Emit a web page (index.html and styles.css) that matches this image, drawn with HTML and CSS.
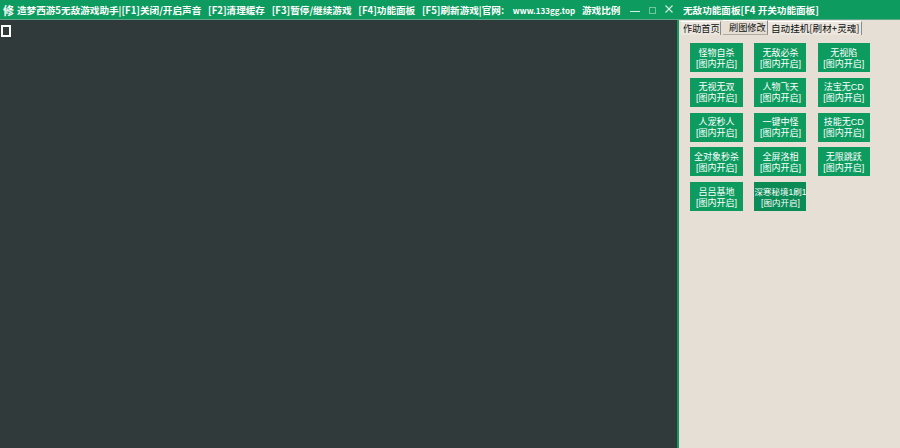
FILE: index.html
```html
<!DOCTYPE html>
<html lang="zh">
<head>
<meta charset="utf-8">
<title>造梦西游</title>
<link rel="stylesheet" href="styles.css">
</head>
<body>
<header class="titlebar">
  <div class="title-left">
    <span class="app-mark">修</span>
    <span class="title-text">造梦西游5无敌游戏助手|[F1]关闭/开启声音 [F2]清理缓存 [F3]暂停/继续游戏 [F4]功能面板 [F5]刷新游戏|官网: <span class="title-url">www.133gg.top</span> 游戏比例</span>
  </div>
  <div class="win-controls">
    <span class="win-btn win-min"></span>
    <span class="win-btn win-max"></span>
    <svg class="win-close" width="8" height="8" viewBox="0 0 8 8"><path d="M0.5 0.5L7.5 7.5M7.5 0.5L0.5 7.5" stroke="#d6efe3" stroke-width="1.1" fill="none"/></svg>
  </div>
  <div class="panel-title">无敌功能面板[F4 开关功能面板]</div>
</header>
<main class="content">
  <section class="game">
    <span class="cursor"></span>
  </section>
  <aside class="panel">
    <nav class="tabs">
      <span class="tab tab-first">作助首页</span>
      <span class="tab tab-active">刷图修改</span>
      <span class="tab tab-last">自动挂机[刷材+灵魂]</span>
    </nav>
    <div class="grid">
      <button class="cheat">怪物自杀<br>[图内开启]</button>
      <button class="cheat">无敌必杀<br>[图内开启]</button>
      <button class="cheat">无视陷<br>[图内开启]</button>
      <button class="cheat">无视无双<br>[图内开启]</button>
      <button class="cheat">人物飞天<br>[图内开启]</button>
      <button class="cheat">法宝无CD<br>[图内开启]</button>
      <button class="cheat">人宠秒人<br>[图内开启]</button>
      <button class="cheat">一键中怪<br>[图内开启]</button>
      <button class="cheat">技能无CD<br>[图内开启]</button>
      <button class="cheat">全对象秒杀<br>[图内开启]</button>
      <button class="cheat">全屏洛相<br>[图内开启]</button>
      <button class="cheat">无限跳跃<br>[图内开启]</button>
      <button class="cheat">吕吕基地<br>[图内开启]</button>
      <button class="cheat cheat-dark cheat-wide">深寒秘境1刷1<br>[图内开启]</button>
    </div>
  </aside>
</main>
</body>
</html>
```
FILE: styles.css
```css
* { box-sizing: border-box; }
html, body { margin: 0; padding: 0; width: 900px; height: 448px; overflow: hidden; }
body { font-family: "Noto Sans CJK SC", "DejaVu Sans", sans-serif; background: #303a3b; }
.titlebar {
  height: 20px;
  background: #0d9b60;
  border-bottom: 1px solid #5fa98a;
  display: flex;
  align-items: center;
  color: #fff;
  white-space: nowrap;
}
.title-left { width: 622px; display: flex; align-items: center; overflow: hidden; flex: none; padding-left: 3px; }
.app-mark { font-size: 11px; font-weight: 700; margin-right: 3px; flex: none; }
.title-text { font-size: 9.6px; font-weight: 700; word-spacing: 4.6px; }
.title-url { font-size: 8px; margin-left: 2px; letter-spacing: 0.05px; }
.win-controls { display: flex; width: 60px; flex: none; align-items: center; padding-left: 8px; gap: 9px; height: 19px; }
.win-btn { display: block; flex: none; }
.win-min { width: 10px; height: 1px; background: #d6efe3; margin-top: 3px; }
.win-max { width: 7px; height: 7px; border: 1px solid #6fc6a0; margin-top: 2px; }
.win-close { flex: none; margin: -2px 0 0 0; }
.panel-title { font-size: 9.6px; font-weight: 700; padding-left: 1px; }
.content { display: flex; height: 428px; }
.game { width: 677px; flex: none; background: #303a3b; padding: 5px 1px; }
.cursor { display: block; width: 10px; height: 12px; border: 2px solid #fff; background: #303a3b; }
.panel { width: 223px; flex: none; background: #e5dfd5; border-left: 2px solid #0d9b60; }
.tabs { display: flex; height: 15px; padding-left: 2px; align-items: flex-start; font-size: 9.2px; color: #111; }
.tab { height: 14px; line-height: 13px; background: #ebe7df; border-right: 1px solid #8d8a84; border-top: 1px solid #fff; white-space: nowrap; }
.tab-first { width: 40px; padding-left: 2px; margin-top: 1px; }
.tab-active { width: 45px; padding-left: 6px; background: #e5dfd5; height: 15px; margin-left: 2px; border-bottom: 1px solid #b0aba3; }
.tab-last { width: 94px; padding-left: 3px; margin-top: 1px; font-size: 9.6px; }
.grid { display: grid; grid-template-columns: 53px 52px 52px; gap: 5.75px 11.4px; padding: 8px 0 0 11px; }
.cheat {
  height: 29px;
  padding: 2px 0 0;
  border: 0;
  background: #0d9b60;
  color: #fff;
  font-family: "Liberation Sans", "Noto Sans CJK SC", sans-serif;
  font-size: 9px;
  line-height: 11px;
  text-align: center;
  white-space: nowrap;
  overflow: hidden;
}
.cheat-wide { font-size: 8.5px; }
.cheat-dark { background: #0b8c57; }
```
